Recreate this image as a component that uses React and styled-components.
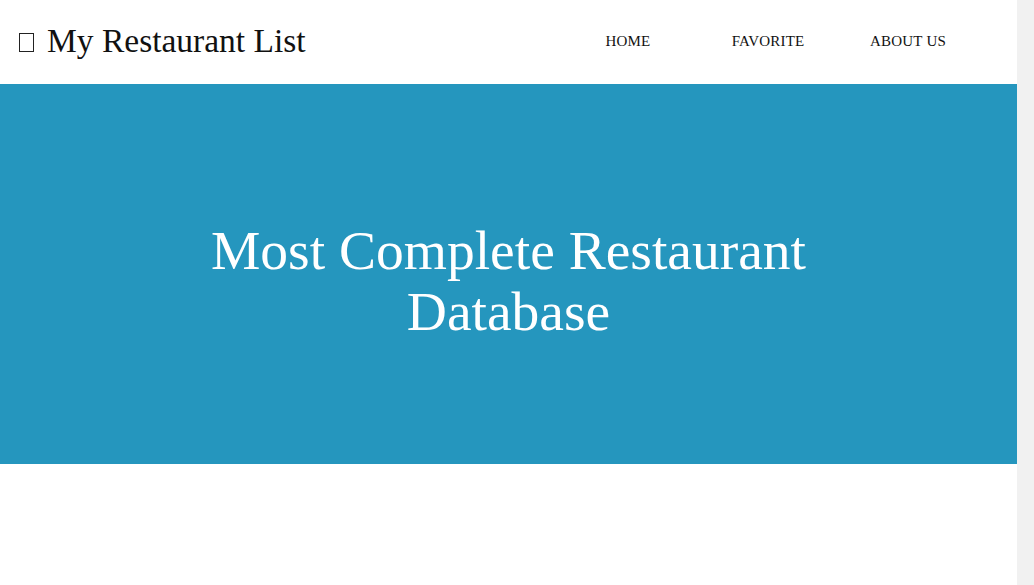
import React from "react";
import styled, { createGlobalStyle } from "styled-components";

const GlobalStyle = createGlobalStyle`
  html {
    background: #f1f1f1;
  }
  body {
    margin: 0;
    font-family: "Liberation Serif", "DejaVu Serif", serif;
    color: #111111;
  }
`;

function App() {
  return (
    <Page>
      <GlobalStyle />
      <Header>
        <Brand>
          <Tofu />
          My Restaurant List
        </Brand>
        <Nav>
          <NavLink href="#">HOME</NavLink>
          <NavLink href="#">FAVORITE</NavLink>
          <NavLink href="#">ABOUT US</NavLink>
        </Nav>
      </Header>
      <Hero>
        <Title>
          Most Complete Restaurant
          <br />
          Database
        </Title>
      </Hero>
      <Filler />
    </Page>
  );
}

export default App;

const Page = styled.div`
  width: calc(100% - 17px);
  min-height: 1050px;
  background: #ffffff;
  display: flex;
  flex-direction: column;
`;

const Header = styled.header`
  height: 84px;
  display: flex;
  align-items: center;
  justify-content: space-between;
  padding: 0 39px 0 19px;
  box-sizing: border-box;
`;

const Brand = styled.div`
  display: flex;
  align-items: center;
  gap: 13px;
  font-size: 33.5px;
  color: #111;
  padding-bottom: 2px;
`;

const Tofu = styled.span`
  display: inline-block;
  width: 13px;
  height: 17px;
  border: 1px solid #222;
  margin-top: 3px;
`;

const Nav = styled.nav`
  display: grid;
  grid-template-columns: repeat(3, 140px);
  padding-bottom: 1px;
`;

const NavLink = styled.a`
  text-align: center;
  font-size: 15px;
  color: #111;
  text-decoration: none;
  letter-spacing: 0.2px;
`;

const Hero = styled.section`
  height: 380px;
  background: #2596be;
  display: flex;
  align-items: center;
  justify-content: center;
  padding-top: 14px;
  box-sizing: border-box;
`;

const Title = styled.h1`
  margin: 0;
  color: #ffffff;
  font-weight: 400;
  font-size: 55.5px;
  line-height: 61px;
  text-align: center;
`;

const Filler = styled.div`
  flex: 1;
`;
